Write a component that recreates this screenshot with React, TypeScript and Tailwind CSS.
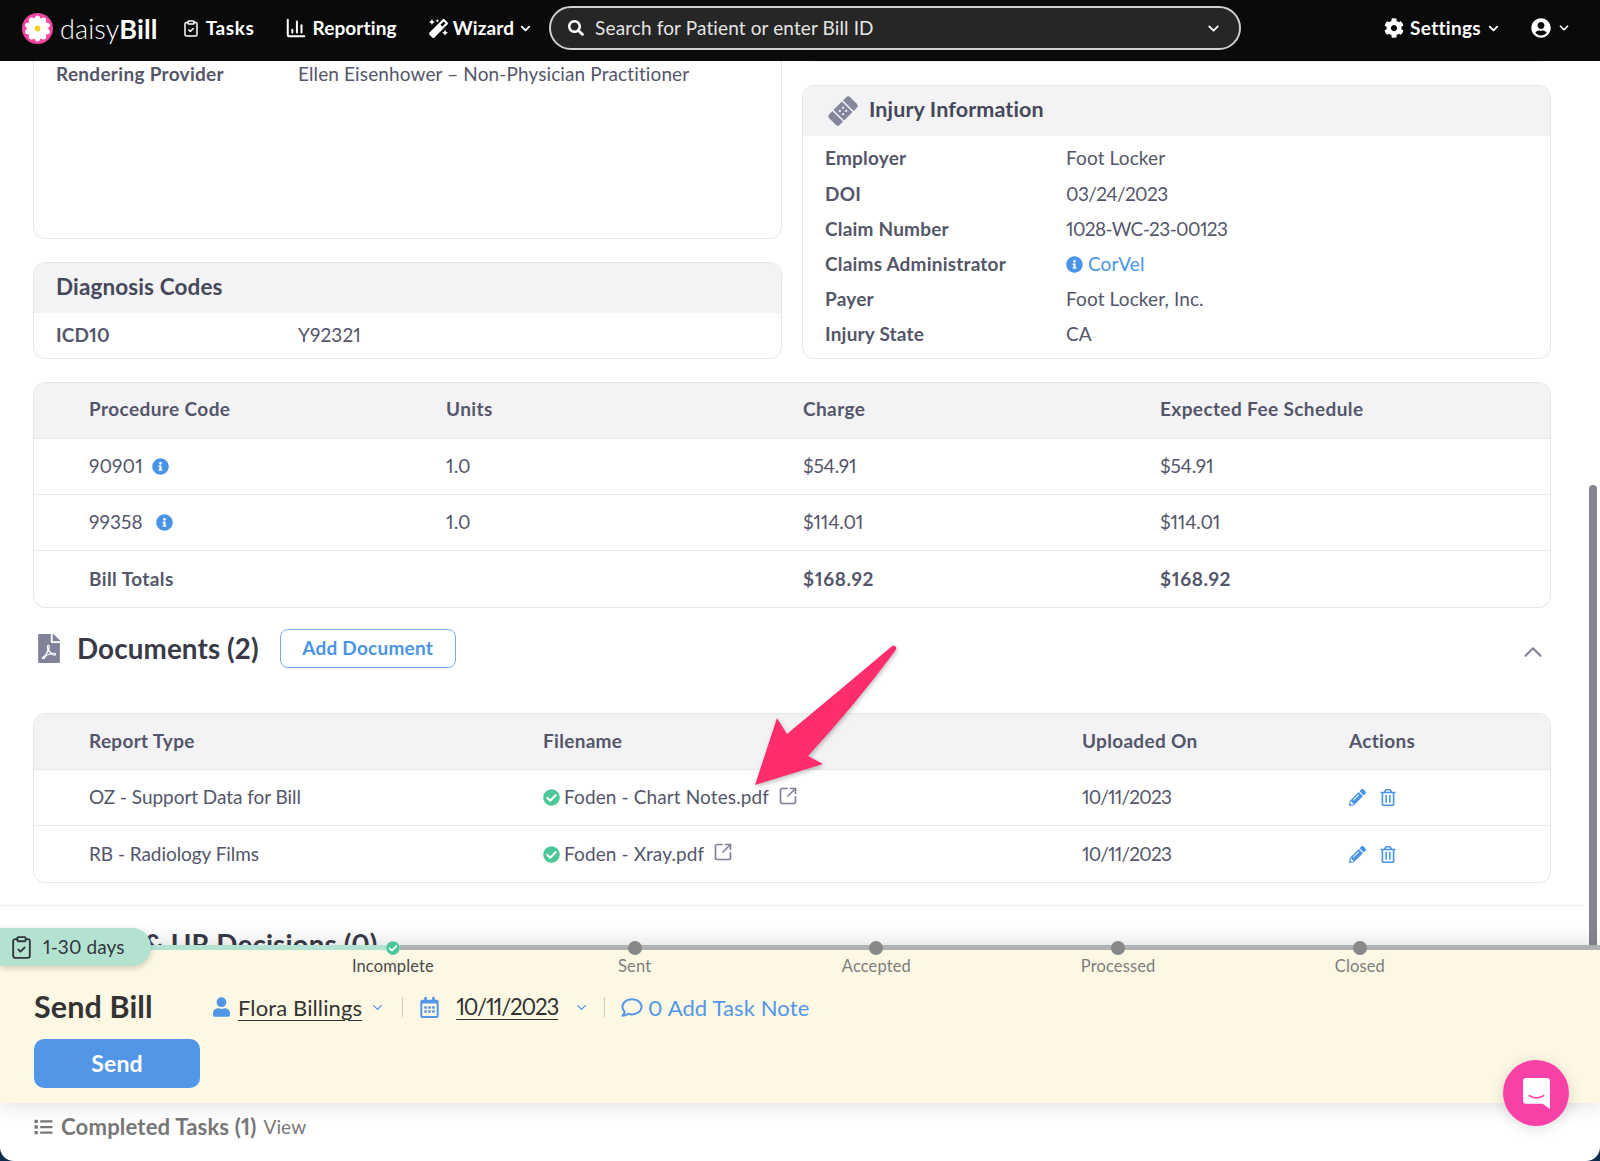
import { ChartColumn, ChevronDown, ChevronUp, ClipboardCheck, SquareArrowOutUpRight } from "lucide-react";
import {
  FaBandAid,
  FaCheckCircle,
  FaCog,
  FaFilePdf,
  FaInfoCircle,
  FaList,
  FaMagic,
  FaPencilAlt,
  FaRegCalendarAlt,
  FaRegComment,
  FaRegTrashAlt,
  FaSearch,
  FaUser,
  FaUserCircle,
} from "react-icons/fa";

const injuryRows = [
  ["Employer", "Foot Locker"],
  ["DOI", "03/24/2023"],
  ["Claim Number", "1028-WC-23-00123"],
  ["Claims Administrator", "CorVel"],
  ["Payer", "Foot Locker, Inc."],
  ["Injury State", "CA"],
];

const procedures = [
  { code: "90901", units: "1.0", charge: "$54.91", fee: "$54.91", gap: "ml-[9px]" },
  { code: "99358", units: "1.0", charge: "$114.01", fee: "$114.01", gap: "ml-[13px]" },
];

const documents = [
  { type: "OZ - Support Data for Bill", file: "Foden - Chart Notes.pdf", date: "10/11/2023" },
  { type: "RB - Radiology Films", file: "Foden - Xray.pdf", date: "10/11/2023" },
];

const steps = ["Incomplete", "Sent", "Accepted", "Processed", "Closed"];

const Daisy = () => (
  <svg viewBox="0 0 32 32" className="h-[31px] w-[31px]">
    <circle cx="16" cy="16" r="16" fill="#f0489f" />
    {[0, 36, 72, 108, 144, 180, 216, 252, 288, 324].map(a => (
      <ellipse key={a} cx="16" cy="8.5" rx="3.6" ry="6" fill="#fff" transform={`rotate(${a} 16 16)`} />
    ))}
    <circle cx="16" cy="16" r="3" fill="#f6d21f" />
  </svg>
);

const NavBar = () => (
  <header className="flex h-[61px] shrink-0 items-center bg-[#0a0a0a] pb-[5px] text-[19px] font-bold text-white">
    <div className="ml-[22px]">
      <Daisy />
    </div>
    <div className="ml-[7px] text-[27px] leading-none">
      <span className="font-light">daisy</span>
      <span className="font-bold">Bill</span>
    </div>
    <ClipboardCheck className="ml-[24px] h-[19px] w-[18px]" strokeWidth={2} />
    <span className="ml-[6px] tracking-[0.6px]">Tasks</span>
    <ChartColumn className="ml-[31px] h-[22px] w-[22px]" strokeWidth={2.2} />
    <span className="ml-[5px]">Reporting</span>
    <FaMagic className="ml-[32px] h-[19px] w-[19px]" />
    <span className="ml-[5px]">Wizard</span>
    <ChevronDown className="ml-[4px] h-[15px] w-[15px]" strokeWidth={3} />
    <div className="ml-[16px] flex h-[44px] w-[692px] items-center rounded-[22px] border-2 border-[#cfcfcf] bg-[#262626] pl-[17px] pr-[17px]">
      <FaSearch className="h-[16px] w-[16px] text-white" />
      <span className="ml-[11px] flex-1 text-[19px] font-normal text-[#e4e4e4]">Search for Patient or enter Bill ID</span>
      <ChevronDown className="h-[17px] w-[17px]" strokeWidth={2.5} />
    </div>
    <FaCog className="ml-auto h-[20px] w-[20px]" />
    <span className="ml-[6px] tracking-[0.3px]">Settings</span>
    <ChevronDown className="ml-[5px] h-[15px] w-[15px]" strokeWidth={3} />
    <FaUserCircle className="ml-[30px] h-[20px] w-[20px]" />
    <ChevronDown className="ml-[6px] mr-[29px] h-[14px] w-[14px]" strokeWidth={3} />
  </header>
);

const TableRow = ({ children, last }: { children: React.ReactNode; last?: boolean }) => (
  <div className={`flex h-[56px] items-center pl-[55px] ${last ? "" : "border-b border-[#e8e8ec]"}`}>{children}</div>
);

const App = () => {
  return (
    <div className="h-[1161px] w-full overflow-hidden bg-[#0f2a4d] [font-family:Lato,sans-serif] text-[19px] tracking-[0.12px] text-[#54566a] proportional-nums">
      <div className="relative flex h-full flex-col overflow-hidden rounded-b-[14px] bg-white">
        <NavBar />

        <main className="relative h-[884px] shrink-0 overflow-hidden">
          <div className="-mt-[20px] pl-[33px] pr-[49px]">
            <div className="grid grid-cols-[749px_749px] gap-x-[20px]">
              <div className="flex flex-col gap-[23px]">
                <section className="h-[198px] rounded-[12px] border border-[#e6e6ea] px-[22px] pt-[20px]">
                  <div className="flex h-[25px] items-center">
                    <span className="w-[242px] font-bold tracking-[0.3px]">Rendering Provider</span>
                    <span>Ellen Eisenhower – Non-Physician Practitioner</span>
                  </div>
                </section>
                <section className="h-[97px] overflow-hidden rounded-[12px] border border-[#e6e6ea]">
                  <div className="flex h-[50px] items-center bg-[#f3f3f5] px-[22px] pb-[3px] text-[22.5px] font-bold text-[#45475a]">Diagnosis Codes</div>
                  <div className="flex h-[44px] items-center px-[22px]">
                    <span className="w-[242px] font-bold">ICD10</span>
                    <span>Y92321</span>
                  </div>
                </section>
              </div>

              <div className="flex flex-col gap-[23px]">
                <div className="h-[21px] rounded-[12px] border border-[#eeeef1]" />
                <section className="h-[274px] overflow-hidden rounded-[12px] border border-[#e6e6ea]">
                  <div className="flex h-[50px] items-center bg-[#f3f3f5] pl-[25px] text-[21.5px] text-[#45475a]">
                    <FaBandAid className="h-[30px] w-[30px] -rotate-45 text-[#84869a]" />
                    <span className="-mt-[3px] ml-[11px] font-bold">Injury Information</span>
                  </div>
                  <div className="px-[22px] pt-[5px]">
                    {injuryRows.map(([k, v]) => (
                      <div key={k} className="flex h-[35.2px] items-center">
                        <span className="w-[241px] font-bold tracking-[0.2px]">{k}</span>
                        {k === "Claims Administrator" ? (
                          <span className="flex items-center text-[#4a94e8]">
                            <FaInfoCircle className="mr-[5px] h-[17px] w-[17px]" />
                            {v}
                          </span>
                        ) : (
                          <span className={/\d/.test(v) ? "tracking-[-0.6px]" : ""}>{v}</span>
                        )}
                      </div>
                    ))}
                  </div>
                </section>
              </div>
            </div>

            <section className="mt-[23px] w-[1518px] overflow-hidden rounded-[12px] border border-[#e6e6ea]">
              <div className="flex h-[56px] items-center border-b border-[#e8e8ec] bg-[#f3f3f5] pb-[2px] pl-[55px] font-bold tracking-[0.4px]">
                <span className="w-[357px]">Procedure Code</span>
                <span className="w-[357px]">Units</span>
                <span className="w-[357px]">Charge</span>
                <span>Expected Fee Schedule</span>
              </div>
              {procedures.map(p => (
                <TableRow key={p.code}>
                  <span className="flex w-[357px] items-center">
                    {p.code}
                    <FaInfoCircle className={`${p.gap} h-[17px] w-[17px] text-[#4a94e8]`} />
                  </span>
                  <span className="w-[357px]">{p.units}</span>
                  <span className="w-[357px] tracking-[-0.2px]">{p.charge}</span>
                  <span className="tracking-[-0.2px]">{p.fee}</span>
                </TableRow>
              ))}
              <TableRow last>
                <span className="w-[714px] font-bold tracking-[0.4px]">Bill Totals</span>
                <span className="w-[357px] font-bold tracking-[0.6px]">$168.92</span>
                <span className="font-bold tracking-[0.6px]">$168.92</span>
              </TableRow>
            </section>

            <div className="mt-[21px] flex h-[39px] w-[1518px] items-center">
              <FaFilePdf className="ml-[5px] h-[29px] w-[22px] text-[#7f8298]" />
              <h2 className="ml-[17px] text-[27.8px] font-bold text-[#383a48]">Documents (2)</h2>
              <button className="ml-[21px] h-[39px] w-[176px] rounded-[8px] border border-[#72aeef] text-center font-bold tracking-[0.25px] text-[#4a94e8]">Add Document</button>
              <ChevronUp className="ml-auto mr-[3px] mt-[7px] h-[30px] w-[30px] text-[#7f8298]" strokeWidth={1.6} />
            </div>

            <section className="mt-[45px] w-[1518px] overflow-hidden rounded-[12px] border border-[#e6e6ea]">
              <div className="flex h-[56px] items-center border-b border-[#e8e8ec] bg-[#f3f3f5] pl-[55px] font-bold tracking-[0.3px]">
                <span className="w-[454px]">Report Type</span>
                <span className="w-[539px]">Filename</span>
                <span className="w-[267px]">Uploaded On</span>
                <span>Actions</span>
              </div>
              {documents.map((d, i) => (
                <TableRow key={d.file} last={i === documents.length - 1}>
                  <span className="w-[454px] tracking-[-0.05px]">{d.type}</span>
                  <span className="flex w-[539px] items-center">
                    <FaCheckCircle className="mr-[4px] h-[17px] w-[17px] text-[#4cc797]" />
                    {d.file}
                    <SquareArrowOutUpRight className="ml-[9px] -mt-[4px] h-[20px] w-[20px] text-[#7f8298]" strokeWidth={2} />
                  </span>
                  <span className="w-[267px] tracking-[-0.8px]">{d.date}</span>
                  <span className="flex items-center text-[#4a94e8]">
                    <FaPencilAlt className="h-[17px] w-[17px]" />
                    <FaRegTrashAlt className="ml-[14px] h-[17px] w-[16px]" />
                  </span>
                </TableRow>
              ))}
            </section>

            <div className="mt-[22px] h-px w-[1584px] -translate-x-[33px] bg-[#eeeef1]" />
            <h2 className="mt-[22px] pl-[52px] text-[27.8px] font-bold leading-[33px] text-[#383a48]">Bills &amp; UR Decisions (0)</h2>
          </div>
          <div className="absolute right-[3px] top-[424px] h-[470px] w-[8px] rounded-t-[4px] bg-[#84858f]" />
        </main>

        <section className="relative z-10 shrink-0 bg-[#fdf8e3] shadow-[0_0_22px_rgba(0,0,0,0.16)]">
          <div className="absolute left-0 right-0 top-0 h-[5px] bg-[#b1b1b1]" />
          <div className="absolute left-0 top-0 h-[5px] w-[393px] bg-[#b3e2d0]" />
          <div className="absolute -top-[17px] left-0 flex h-[38px] w-[151px] items-center rounded-r-[19px] bg-[#b3e2d0] pl-[9px] text-[19px] text-[#33363f] shadow-[0_2px_6px_rgba(0,0,0,0.18)]">
            <ClipboardCheck className="h-[29px] w-[25px]" strokeWidth={1.8} />
            <span className="ml-[9px]">1-30 days</span>
          </div>

          <div className="relative -mt-[4px] ml-[272px] flex">
            {steps.map((s, i) => (
              <div key={s} className="flex w-[241.75px] flex-col items-center">
                {i === 0 ? (
                  <span className="flex h-[14px] w-[14px] items-center justify-center rounded-full bg-white">
                    <FaCheckCircle className="h-[14px] w-[14px] text-[#4cc797]" />
                  </span>
                ) : (
                  <span className="h-[14px] w-[14px] rounded-full bg-[#888888]" />
                )}
                <span className={`mt-[1px] text-[16.5px] leading-[20px] ${i === 0 ? "text-[#4a4a4a]" : "text-[#7d7d7d]"}`}>{s}</span>
              </div>
            ))}
          </div>

          <div className="mt-[11px] flex h-[40px] items-center pl-[34px]">
            <h3 className="w-[179px] text-[30.5px] font-bold text-[#333333]">Send Bill</h3>
            <FaUser className="h-[20px] w-[17px] text-[#5296e8]" />
            <span className="ml-[8px] text-[22px] text-[#333333] underline decoration-1 underline-offset-4">Flora Billings</span>
            <ChevronDown className="ml-[8px] h-[15px] w-[15px] text-[#5296e8]" strokeWidth={2} />
            <span className="ml-[17px] h-[20px] w-px bg-[#cfcabb]" />
            <FaRegCalendarAlt className="ml-[16px] h-[21px] w-[21px] text-[#5296e8]" />
            <span className="ml-[16px] text-[22.3px] tracking-[-1.2px] text-[#333333] underline decoration-1 underline-offset-4">10/11/2023</span>
            <ChevronDown className="ml-[16px] h-[15px] w-[15px] text-[#5296e8]" strokeWidth={2} />
            <span className="ml-[15px] h-[20px] w-px bg-[#cfcabb]" />
            <FaRegComment className="ml-[16px] h-[21px] w-[22px] text-[#5296e8]" />
            <span className="ml-[5px] text-[22px] text-[#5296e8]">0 Add Task Note</span>
          </div>

          <div className="pb-[15px] pl-[34px] pt-[12px]">
            <button className="h-[49px] w-[166px] rounded-[10px] bg-[#5296e8] text-[23px] font-bold text-white">Send</button>
          </div>
        </section>

        <div className="flex h-[48px] items-center pl-[34px] text-[#777777]">
          <FaList className="h-[18px] w-[19px]" />
          <span className="ml-[8px] text-[22.2px] font-bold">Completed Tasks (1)</span>
          <span className="ml-[7px]">View</span>
        </div>

        <button className="absolute left-[1503px] top-[1060px] z-20 flex h-[66px] w-[66px] items-center justify-center rounded-full bg-[#f741a7] shadow-[0_2px_14px_rgba(0,0,0,0.14)]">
          <svg viewBox="0 0 28 32" className="h-[33px] w-[29px]">
            <path d="M4 1h20a3 3 0 0 1 3 3v27l-7-5H4a3 3 0 0 1-3-3V4a3 3 0 0 1 3-3z" fill="#fff" />
            <path d="M7 18c4 3 10 3 14 0" fill="none" stroke="#f741a7" strokeWidth="1.6" strokeLinecap="round" />
          </svg>
        </button>

        <svg viewBox="0 0 150 160" className="absolute left-[750px] top-[640px] z-20 h-[160px] w-[150px] drop-shadow-[1px_2px_2px_rgba(0,0,0,0.25)]">
          <path d="M141 7 Q144 4 146 7 Q147 9 145 11 Q105 65 58 116 L73 124 L5 145 L27 78 L37 94 Q90 50 141 7 Z" fill="#ff2d6b" />
        </svg>
      </div>
    </div>
  );
};

export default App;
